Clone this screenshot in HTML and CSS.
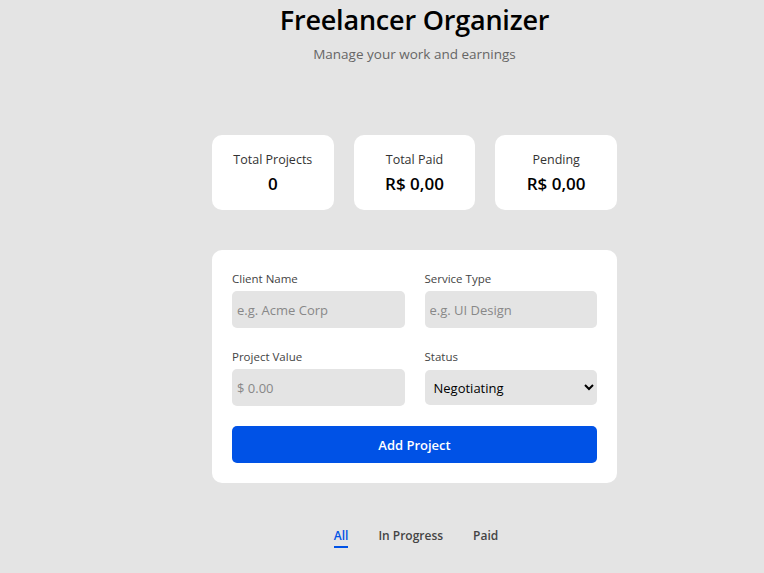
FILE: index.html
```html
<!DOCTYPE html>
<html>
<head>
<meta charset="utf-8">
<link rel="stylesheet" href="styles.css">
</head>
<body>
<main class="app">
  <header class="header">
    <h1 class="title">Freelancer Organizer</h1>
    <p class="subtitle">Manage your work and earnings</p>
  </header>
  <section class="stats">
    <div class="stat">
      <div class="stat-label">Total Projects</div>
      <div class="stat-value">0</div>
    </div>
    <div class="stat">
      <div class="stat-label">Total Paid</div>
      <div class="stat-value">R$ 0,00</div>
    </div>
    <div class="stat">
      <div class="stat-label">Pending</div>
      <div class="stat-value">R$ 0,00</div>
    </div>
  </section>
  <form class="form">
    <div class="grid">
      <label class="field">
        <span class="field-label">Client Name</span>
        <input class="input" type="text" placeholder="e.g. Acme Corp">
      </label>
      <label class="field">
        <span class="field-label">Service Type</span>
        <input class="input" type="text" placeholder="e.g. UI Design">
      </label>
      <label class="field">
        <span class="field-label">Project Value</span>
        <input class="input" type="text" placeholder="$ 0.00">
      </label>
      <label class="field">
        <span class="field-label">Status</span>
        <select class="select">
          <option>Negotiating</option>
          <option>In Progress</option>
          <option>Paid</option>
        </select>
      </label>
    </div>
    <button class="btn" type="button">Add Project</button>
  </form>
  <nav class="tabs">
    <span class="tab active">All</span>
    <span class="tab">In Progress</span>
    <span class="tab">Paid</span>
  </nav>
</main>
</body>
</html>
```
FILE: styles.css
```css
* { box-sizing: border-box; }
html, body { margin: 0; padding: 0; }
body {
  background: #e4e4e4;
  font-family: "Open Sans", "Noto Sans", sans-serif;
  color: #111;
}
.app {
  width: 405px;
  margin-left: 212px;
}
.header { text-align: center; }
.title {
  margin: 0;
  padding-top: 2px;
  font-size: 27px;
  line-height: 36px;
  font-weight: 600;
  color: #000;
  letter-spacing: -0.2px;
}
.subtitle {
  margin: 7px 0 0;
  font-size: 13.5px;
  line-height: 19px;
  color: #666;
}
.stats {
  margin-top: 71px;
  display: grid;
  grid-template-columns: repeat(3, minmax(0, 1fr));
  gap: 20px;
}
.stat {
  background: #fff;
  border-radius: 10px;
  padding: 16px 10px 14px;
  height: 75px;
  text-align: center;
}
.stat-label {
  font-size: 12.5px;
  line-height: 18px;
  color: #333;
  font-weight: 500;
}
.stat-value {
  margin-top: 3px;
  font-size: 17px;
  line-height: 24px;
  font-weight: 600;
  color: #000;
}
.form {
  margin-top: 40px;
  background: #fff;
  border-radius: 10px;
  padding: 20px;
}
.grid {
  display: grid;
  grid-template-columns: minmax(0, 1fr) minmax(0, 1fr);
  column-gap: 20px;
  row-gap: 20px;
}
.field { display: flex; flex-direction: column; min-width: 0; }
.field-label {
  font-size: 11.5px;
  line-height: 17px;
  color: #444;
  margin-bottom: 4px;
}
.input, .select {
  width: 100%;
  height: 37px;
  border: none;
  border-radius: 5px;
  background: #e4e4e4;
  font-family: inherit;
  font-size: 13px;
  padding: 0 5px;
  color: #111;
  outline: none;
}
.input::placeholder { color: #888; }
.select {
  height: 35px;
  margin-top: 1px;
  padding: 0 4px 0 5px;
  color: #000;
}
.btn {
  margin-top: 20px;
  width: 100%;
  height: 37px;
  border: none;
  border-radius: 5px;
  background: #0052e6;
  color: #fff;
  font-family: inherit;
  font-size: 13px;
  font-weight: 600;
}
.tabs {
  margin-top: 44px;
  display: flex;
  justify-content: center;
  gap: 30px;
  padding-left: 3px;
}
.tab {
  font-size: 12px;
  line-height: 18px;
  font-weight: 600;
  color: #444;
  padding-bottom: 1px;
  border-bottom: 2px solid transparent;
}
.tab.active {
  color: #0052e6;
  border-bottom-color: #0052e6;
}
```
